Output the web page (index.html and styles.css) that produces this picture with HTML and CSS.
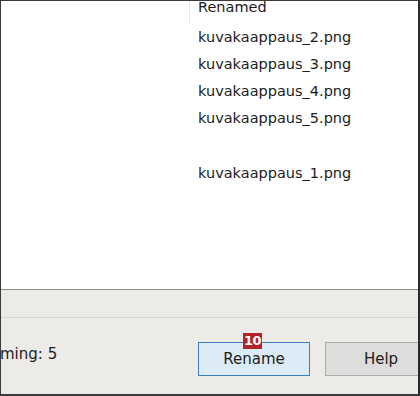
FILE: index.html
```html
<!DOCTYPE html>
<html lang="fi">
<head>
    <meta charset="UTF-8">
    <title>Rename</title>
    <link rel="stylesheet" href="styles.css">
</head>
<body>
    <div class="window">
        <div class="list">
            <div class="spacer"></div>
            <div class="column">
                <div class="column-head">Renamed</div>
                <div class="row">kuvakaappaus_2.png</div>
                <div class="row">kuvakaappaus_3.png</div>
                <div class="row">kuvakaappaus_4.png</div>
                <div class="row">kuvakaappaus_5.png</div>
                <div class="row"></div>
                <div class="row">kuvakaappaus_1.png</div>
            </div>
        </div>
        <div class="panel">
            <div class="panel-top"></div>
            <div class="panel-bottom">
                <span class="status">ming: 5</span>
                <div class="buttons">
                    <button class="btn btn-default">Rename<span class="badge">10</span></button>
                    <button class="btn">Help</button>
                </div>
            </div>
        </div>
    </div>
</body>
</html>
```

FILE: styles.css
```css
body {
    margin: 0;
    font-family: "DejaVu Sans", sans-serif;
    color: #1c1c1c;
}

.window {
    width: 420px;
    height: 396px;
    box-sizing: border-box;
    border-top: 1px solid #3a3a3a;
    border-left: 1px solid #3a3a3a;
    border-right: 2px solid #2a2a2a;
    border-bottom: 2px solid #3a3a3a;
    display: flex;
    flex-direction: column;
    overflow: hidden;
}

.list {
    height: 288px;
    background: #ffffff;
    display: flex;
    border-bottom: 1px solid #8c8c90;
}

.spacer {
    width: 188px;
}

.column {
    flex: 1;
}

.column-head {
    height: 23px;
    line-height: 14px;
    font-size: 14.5px;
    padding-left: 8px;
    box-sizing: border-box;
    border-left: 1px solid #e6e6e6;
    margin-top: -1px;
    margin-bottom: 1px;
}

.row {
    height: 27px;
    line-height: 27px;
    font-size: 14.5px;
    padding-left: 9px;
}

.row:last-child {
    line-height: 29px;
}

.panel {
    flex: 1;
    background: #ecebe8;
    display: flex;
    flex-direction: column;
}

.panel-top {
    height: 27px;
    border-bottom: 1px solid #d9d8d5;
}

.panel-bottom {
    flex: 1;
    display: flex;
    align-items: center;
    justify-content: space-between;
}

.status {
    font-size: 15px;
    margin-left: -1px;
    margin-bottom: 4px;
}

.buttons {
    display: flex;
    gap: 15px;
    margin-right: -19px;
    margin-top: 6px;
}

.btn {
    position: relative;
    width: 112px;
    height: 34px;
    font-family: "DejaVu Sans", sans-serif;
    font-size: 15px;
    color: #1c1c1c;
    background: #dddddb;
    border: 1px solid #adadad;
    padding: 0;
}

.btn-default {
    background: #dcecf7;
    border: 1px solid #3d7fc2;
}

.badge {
    position: absolute;
    top: -10px;
    left: 44px;
    background: #b0232b;
    color: #ffffff;
    font-weight: bold;
    font-size: 13px;
    line-height: 16px;
    padding: 0 1px;
    letter-spacing: -0.5px;
}
```
